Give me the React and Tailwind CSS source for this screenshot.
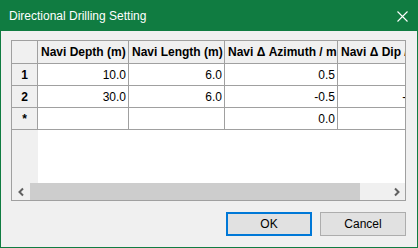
import React from "react";

const cols = [
  { label: "Navi Depth (m)", w: "w-[91px]" },
  { label: "Navi Length (m)", w: "w-[96px]" },
  { label: "Navi \u0394 Azimuth / m", w: "w-[113px]" },
  { label: "Navi \u0394 Dip / m", w: "w-[88px]" },
];

const rows = [
  { head: "1", h: "h-[22px]", vals: ["10.0", "6.0", "0.5", "0.0"] },
  { head: "2", h: "h-[22px]", vals: ["30.0", "6.0", "-0.5", "-0.5"] },
  { head: "*", h: "h-[22px]", vals: ["", "", "0.0", "0.0"] },
];

function Chevron({ dir }) {
  return (
    <svg width="8" height="10" viewBox="0 0 8 10">
      {dir === "left" ? (
        <path d="M6 1.5 L2.5 5 L6 8.5" fill="none" stroke="#606060" strokeWidth="2" />
      ) : (
        <path d="M2 1.5 L5.5 5 L2 8.5" fill="none" stroke="#606060" strokeWidth="2" />
      )}
    </svg>
  );
}

export default function App() {
  return (
    <div className="w-[418px] h-[248px] border border-[#107c41] bg-[#f0f0f0] flex flex-col font-['Liberation_Sans',Arial,sans-serif] text-[12px] text-black">
      {/* Barre de titre */}
      <div className="h-[30px] shrink-0 bg-[#107c41] flex items-center justify-between pl-[8px] pr-[9px] text-white">
        <span>Directional Drilling Setting</span>
        <svg width="11" height="11" viewBox="0 0 11 11">
          <path d="M0.5 0.5 L10.5 10.5 M10.5 0.5 L0.5 10.5" stroke="white" strokeWidth="1.1" />
        </svg>
      </div>

      <div className="flex-1 flex flex-col px-[10px] pt-[9px]">
        {/* Grille */}
        <div className="w-[395px] h-[161px] border border-[#a0a0a0] bg-white flex flex-col">
          <div className="flex-1 flex flex-col overflow-hidden">
            <div className="flex h-[23px] shrink-0">
              <div className="w-[26px] shrink-0 bg-[#f0f0f0] border-r border-b border-[#a0a0a0]"></div>
              {cols.map((c) => (
                <div
                  key={c.label}
                  className={`${c.w} shrink-0 bg-[#f0f0f0] border-r border-b border-[#a0a0a0] font-bold pl-[3px] flex items-center whitespace-nowrap overflow-hidden`}
                >
                  {c.label}
                </div>
              ))}
            </div>
            {rows.map((r) => (
              <div key={r.head} className={`flex ${r.h} shrink-0`}>
                <div className="w-[26px] shrink-0 bg-[#f0f0f0] border-r border-b border-[#a0a0a0] font-bold flex items-center justify-center">
                  {r.head}
                </div>
                {cols.map((c, i) => (
                  <div
                    key={c.label}
                    className={`${c.w} shrink-0 border-r border-b border-[#a0a0a0] pr-[2px] flex items-center justify-end whitespace-nowrap`}
                  >
                    {r.vals[i]}
                  </div>
                ))}
              </div>
            ))}
            <div className="flex-1 flex">
              <div className="w-[26px] bg-[#f0f0f0]"></div>
            </div>
          </div>
          {/* Barre de défilement */}
          <div className="h-[17px] shrink-0 flex bg-[#f0f0f0]">
            <div className="w-[18px] flex items-center justify-center">
              <Chevron dir="left" />
            </div>
            <div className="w-[330px] bg-[#cdcdcd]"></div>
            <div className="flex-1"></div>
            <div className="w-[17px] flex items-center justify-center">
              <Chevron dir="right" />
            </div>
          </div>
        </div>

        {/* Actions */}
        <div className="flex justify-end gap-[8px] mt-[11px] w-[395px]">
          <button className="w-[86px] h-[24px] border-2 border-[#0078d7] bg-[#e1e1e1]">OK</button>
          <button className="w-[86px] h-[24px] border border-[#adadad] bg-[#e1e1e1]">Cancel</button>
        </div>
      </div>
    </div>
  );
}
